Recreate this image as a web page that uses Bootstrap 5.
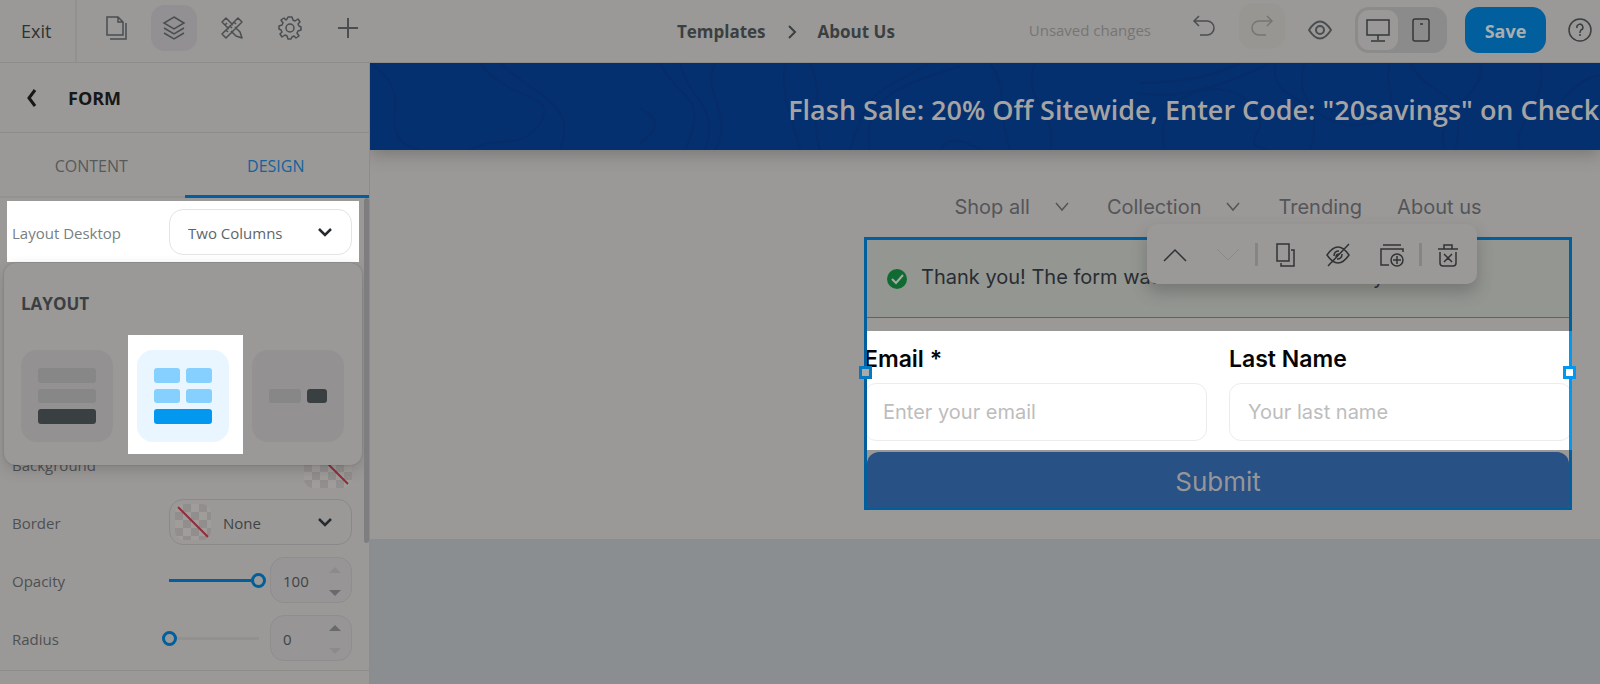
<!DOCTYPE html>
<html lang="en">
<head>
<meta charset="utf-8">
<meta name="viewport" content="width=device-width, initial-scale=1">
<title>Site editor – Form</title>
<link href="https://cdn.jsdelivr.net/npm/bootstrap@5.3.0/dist/css/bootstrap.min.css" rel="stylesheet">
<style>
:root{--paper:#9b9997;--ink:#3a3f42;--line:#8d8c8b;--accent:#005f9c;--bright:#0398f0}
html,body{height:100%}
body{background:var(--paper);color:var(--ink);font-family:"Open Sans","Noto Sans",sans-serif;font-size:15px;line-height:24px;overflow:hidden}
svg{display:block;fill:none;stroke:currentColor;flex:none}
button,select,input{font:inherit;color:inherit}
.topbar{height:63px;border-bottom:1px solid var(--line)}
.exit-link{width:77px;border-right:2px solid #929190;color:#2e3235;font-size:18px;padding-left:21px}
.tool{width:46px;height:46px;border:0;border-radius:14px;background:none;padding:0;display:grid;place-items:center;color:#4a4e51}
.tool.active{background:#929092}
.tool.soft{background:#989693}
.tools{padding:5px 0 0 16px;gap:12px}
.crumbs{font-size:17px;font-weight:700;padding:2px 0 0 172px;gap:16px}
.status{font-size:15px;color:#757575;margin-right:30px}
.actions{padding-bottom:2px}
.devices{background:#8b8b8b;border-radius:14px;padding:3px;height:46px;width:92px;margin:0 18px 0 12px}
.devices button{width:52px;height:40px;border:0;background:none;border-radius:11px;display:grid;place-items:center;padding:0;color:#35383a}
.devices .on{background:var(--paper);width:40px;flex:none}
.save{width:81px;height:46px;border:0;border-radius:14px;background:var(--accent);color:#a9aeb0;font-weight:700;font-size:18px;padding:2px 0 0;margin-right:22px}
.side{width:370px;border-right:1px solid var(--line)}
.side-head{height:70px;border-bottom:1px solid var(--line);font-size:18px;font-weight:700;color:#151719}
.side-tabs{height:65px;border-bottom:2px solid #949291;font-size:16px}
.side-tabs a{color:#56595b;margin-bottom:-2px;padding:1px 2px 0 0}
.side-tabs a.active{color:#16629a;border-bottom:3px solid var(--accent);padding-top:4px}
.props{padding-left:12px;padding-right:17px}
.prop{height:46px;margin-bottom:12px;color:#4d5052}
.prop:last-child{margin-bottom:9px}
.prop label,.prop>span{padding-top:2px}
.prop.spot{background:#fff;color:#78807f;height:61px;margin:3px -7px 179px -5px;padding:1px 7px 0 5px}
.picker{width:183px;height:46px}
.picker select{appearance:none;width:100%;height:100%;border:1px solid #8a898a;border-radius:14px;background:transparent;padding:2px 0 0 18px;color:#3f4345}
.picker.with-swatch select{padding-left:53px}
.spot .picker select{border-color:#e2e4e5;color:#5d6568}
.picker .arrow{position:absolute;right:20px;top:19px;pointer-events:none;color:#252b2e}
.swatch{width:36px;height:36px;border-radius:9px;overflow:hidden;background:repeating-conic-gradient(#918f8d 0 25%,#9f9c9a 0 50%) 0 0/16px 16px}
.swatch svg{width:100%;height:100%;stroke:#932a3a}
.picker .swatch{position:absolute;left:6px;top:5px;pointer-events:none}
.swatch.large{width:48px;height:48px}
.slider{width:104px;height:20px;appearance:none;background:none}
.slider::-webkit-slider-runnable-track{height:15px;background:linear-gradient(var(--fill),var(--fill)) center/calc(100% - 14px) 3px no-repeat}
.slider::-webkit-slider-thumb{appearance:none;width:15px;height:15px;border:3px solid var(--accent);border-radius:50%;background:var(--paper)}
.full{--fill:#005f9c}.empty{--fill:#939190}
.stepper{width:82px;height:46px;border:1px solid #8f8d8e;border-radius:14px;background:#989596}
.stepper input{width:100%;height:100%;border:0;background:none;padding:2px 0 0 12px;appearance:textfield;color:#3f4345}
.stepper input::-webkit-inner-spin-button{appearance:none;margin:0}
.stepper svg{position:absolute;right:10px;fill:#676b6d;stroke:none}
.stepper .up{top:9px}.stepper .down{bottom:6px}.stepper .off{fill:#8c8b8b}
.divider{border:0;border-top:1px solid var(--line);opacity:1}
.layout-menu{position:absolute;left:4px;right:7px;top:200px;height:202px;background:var(--paper);border-radius:12px;box-shadow:0 5px 14px rgba(40,40,40,.2),0 0 2px rgba(40,40,40,.25);padding:29px 17px 0}
.layout-menu h2{font-size:17px;line-height:24px;font-weight:700;margin:0 0 19px}
.choices{gap:9px}
.choice{border:0;background:none;padding:15px 8px 12px;width:107px;margin-left:-8px;margin-right:8px}
.choice svg{width:92px;height:92px;stroke:none;border-radius:16px;background:#949192}
.choice.picked{background:#fff;width:115px;padding-left:9px;padding-right:14px;margin:0 0 0 -9px}
.choice.picked svg{background:#e9f6ff}
.scroller{position:absolute;right:0;top:135px;width:5px;height:345px;border-radius:3px;background:#7e7e80}
.stage{background:#8a8e91}
.banner{height:87px;background:#05306f;box-shadow:0 4px 16px rgba(70,65,70,.4);position:relative;color:#a5a4a3}
.banner p{padding:6px 0 0 34%;font-size:27px;line-height:40px;font-weight:600;margin:0;position:relative}
.banner svg{position:absolute;inset:0;width:100%;height:100%;stroke:#062d69;stroke-width:2}
.sheet{background:var(--paper);height:389px;padding-left:calc(40% + 2px);padding-right:28px;font-family:Inter,"Liberation Sans",sans-serif;color:#505052;font-size:20px}
.site-nav{padding-top:45px;height:87px;gap:35px}
.site-nav a{color:#545559}
.site-nav svg{margin-left:25px;margin-right:3px}
.form-box{border:3px solid var(--accent);height:273px}
.alert-done{height:78px;background:#949692;border-bottom:1px solid #377c4b;padding:0 0 3px 20px;color:#292d33;font-size:20px}
.alert-done svg{margin:3px 14px 0 0}
.fields{background:#fff;margin:13px -3px 0 0;height:119px;column-gap:22px;padding-top:13px}
.fields>div{flex:1 1 0}
.fields label{font-size:23px;line-height:30px;font-weight:600;color:#050505;margin-bottom:9px;display:block}
.fields input{width:100%;height:58px;border:1px solid #ececec;border-radius:12px;background:#fff;padding:0 18px;font-size:20px}
.fields input::placeholder{color:#bdbdbd;opacity:1}
.fields .first{margin-left:-3px}
.submit{height:56px;border:0;border-radius:12px 12px 2px 2px;background:#285185;color:#969698;font-size:26px;margin-top:2px;padding:3px 0 0}
.frame-side{position:absolute;left:-3px;top:91px;height:119px;width:3px;background:var(--accent)}
.grip{position:absolute;width:13px;height:13px;border:3px solid var(--bright);background:#aaa;top:126px}
.grip.west{left:-8px;border-color:#0579c2}.grip.east{right:-7px;background:#fff}
.edge{position:absolute;right:-3px;top:91px;height:119px;width:3px;background:var(--bright)}
.float-tools{position:absolute;right:92px;top:-16px;width:330px;height:60px;background:var(--paper);border-radius:10px;box-shadow:0 8px 16px rgba(50,50,50,.3);color:#303336;padding:1px 2px 0 1px}
.float-tools button{border:0;background:none;padding:0;color:inherit;width:53px;display:grid;place-items:center}
.float-tools .faint{color:#8a888a}
.float-tools i{width:3px;height:23px;background:#868586}
</style>
</head>
<body class="d-flex flex-column">
<header class="topbar d-flex flex-shrink-0">
  <a href="#" class="exit-link d-flex align-items-center text-decoration-none">Exit</a>
  <div class="tools d-flex">
    <button class="tool" aria-label="Pages"><svg width="24" height="26" stroke-width="1.5"><path d="M3 2H14L19 7V20H3ZM14 2V7H19M22 8V24H6"/></svg></button>
    <button class="tool active" aria-label="Layers"><svg width="24" height="26" stroke-width="1.5"><path d="M12 2L22 8L12 14L2 8ZM2 13L12 19L22 13M2 18L12 24L22 18"/></svg></button>
    <button class="tool" aria-label="Design"><svg width="24" height="24" stroke-width="1.5" stroke-linejoin="round"><path d="M9 13L2 6L6 2L13 9M15 11L20 16L22 22L16 20L11 15M5 9L7 7M18 2L22 6L6 22L2 18ZM14 6L16 8M10 10L12 12M6 14L8 16"/></svg></button>
    <button class="tool" aria-label="Settings"><svg width="24" height="24" viewBox="0 0 24 24" stroke-width="1.5" stroke-linejoin="round"><path d="M10 1H14L15 4L17 5L20 3L22 6L20 8L21 10L23 11V14L20 15L19 17L21 20L18 22L16 20L14 21L13 23H10L9 20L7 19L4 21L2 18L4 16L3 14L1 13V10L4 9L5 7L3 4L6 2L8 4L9 3Z"/><circle cx="12" cy="12" r="4"/></svg></button>
    <button class="tool" aria-label="Add"><svg width="22" height="22" stroke-width="2"><path d="M11 1V21M1 11H21"/></svg></button>
  </div>
  <nav class="crumbs d-flex align-items-center flex-grow-1 justify-content-center" aria-label="Breadcrumb">
    <span>Templates</span>
    <svg width="20" height="14" stroke-width="2"><path d="M7 1L13 7L7 13"/></svg>
    <span>About Us</span>
  </nav>
  <div class="actions d-flex align-items-center">
    <span class="status">Unsaved changes</span>
    <button class="tool mb-2 me-2" aria-label="Undo"><svg width="24" height="22" stroke-width="1.5"><path d="M7 1L2 6L7 11M2 6H15A6 6 0 0 1 15 20H8"/></svg></button>
    <button class="tool soft mb-2 ms-1 me-2" aria-label="Redo"><svg width="24" height="22" stroke-width="1.5" opacity=".45"><path d="M17 1L22 6L17 11M22 6H9A6 6 0 0 0 9 20H16"/></svg></button>
    <button class="tool ms-1" aria-label="Preview"><svg width="24" height="20" stroke-width="2"><path d="M1 10Q12 -7 23 10Q12 27 1 10Z"/><circle cx="12" cy="10" r="4"/></svg></button>
    <div class="devices d-flex">
      <button class="on" aria-label="Desktop"><svg width="24" height="24" stroke-width="1.5"><path d="M1 2H23V17H1ZM12 17V22M5 23H19"/></svg></button>
      <button aria-label="Mobile"><svg width="18" height="24" stroke-width="1.5"><rect x="1" y="1" width="16" height="22" rx="2"/><path d="M8 6H11"/></svg></button>
    </div>
    <button class="save">Save</button>
    <button class="border-0 bg-transparent p-0 me-2" aria-label="Help"><svg width="24" height="24" stroke-width="1.5"><circle cx="12" cy="12" r="11"/><path d="M9 10A3 3 0 1 1 13 12Q12 13 12 15M12 16V18"/></svg></button>
  </div>
</header>

<div class="d-flex flex-grow-1 overflow-hidden">
  <aside class="side flex-shrink-0 position-relative overflow-hidden">
    <div class="side-head d-flex align-items-center">
      <button class="border-0 bg-transparent p-0 ms-4 me-4" aria-label="Back"><svg width="16" height="18" stroke-width="3"><path d="M11 1L5 9L11 17"/></svg></button>
      <span class="ps-1">FORM</span>
    </div>
    <nav class="side-tabs d-flex">
      <a href="#" class="w-50 d-flex align-items-center justify-content-center text-decoration-none">CONTENT</a>
      <a href="#" class="active w-50 d-flex align-items-center justify-content-center text-decoration-none">DESIGN</a>
    </nav>
    <div class="props">
      <div class="prop spot d-flex align-items-center justify-content-between">
        <label for="layout">Layout Desktop</label>
        <div class="picker position-relative"><select id="layout"><option>Two Columns</option></select><svg class="arrow" width="14" height="10" stroke-width="2.5"><path d="M1 1L7 7L13 1"/></svg></div>
      </div>
      <div class="prop d-flex align-items-center justify-content-between"><span>Background</span><div class="swatch large"><svg viewBox="0 0 36 36" stroke-width="1.5"><path d="M3 3L33 33"/></svg></div></div>
      <div class="prop d-flex align-items-center justify-content-between">
        <label for="border">Border</label>
        <div class="picker with-swatch position-relative"><select id="border"><option>None</option></select><div class="swatch"><svg viewBox="0 0 36 36" stroke-width="2"><path d="M3 3L33 33"/></svg></div><svg class="arrow" width="14" height="10" stroke-width="2.5"><path d="M1 1L7 7L13 1"/></svg></div>
      </div>
      <div class="prop d-flex align-items-center">
        <label for="opacity" class="me-auto">Opacity</label>
        <input class="slider full" type="range" id="opacity" min="0" max="100" value="100">
        <div class="stepper position-relative ms-1"><input type="number" value="100" aria-label="Opacity value"><svg class="up off" width="12" height="6"><path d="M0 6L6 0L12 6Z"/></svg><svg class="down" width="12" height="6"><path d="M0 0L6 6L12 0Z"/></svg></div>
      </div>
      <div class="prop d-flex align-items-center">
        <label for="radius" class="me-auto">Radius</label>
        <input class="slider empty" type="range" id="radius" min="0" max="100" value="0">
        <div class="stepper position-relative ms-1"><input type="number" value="0" aria-label="Radius value"><svg class="up" width="12" height="6"><path d="M0 6L6 0L12 6Z"/></svg><svg class="down off" width="12" height="6"><path d="M0 0L6 6L12 0Z"/></svg></div>
      </div>
    </div>
    <hr class="divider m-0">
    <section class="layout-menu">
      <h2>LAYOUT</h2>
      <div class="choices d-flex">
        <button class="choice" aria-label="One column"><svg viewBox="0 0 92 92"><g fill="#878787"><rect x="17" y="18" width="58" height="15" rx="3"/><rect x="17" y="39" width="58" height="14" rx="3"/></g><rect x="17" y="59" width="58" height="15" rx="3" fill="#3a3f42"/></svg></button>
        <button class="choice picked" aria-label="Two columns"><svg viewBox="0 0 92 92"><g fill="#85d0ff"><rect x="17" y="18" width="26" height="15" rx="3"/><rect x="49" y="18" width="26" height="15" rx="3"/><rect x="17" y="39" width="26" height="14" rx="3"/><rect x="49" y="39" width="26" height="14" rx="3"/></g><rect x="17" y="59" width="58" height="15" rx="3" fill="#0398f0"/></svg></button>
        <button class="choice" aria-label="Inline"><svg viewBox="0 0 92 92"><rect x="17" y="39" width="32" height="14" rx="3" fill="#878787"/><rect x="55" y="39" width="20" height="14" rx="3" fill="#3a3f42"/></svg></button>
      </div>
    </section>
    <div class="scroller"></div>
  </aside>

  <main class="stage flex-grow-1 overflow-hidden">
    <div class="banner d-flex align-items-center">
      <svg viewBox="0 0 1230 87" preserveAspectRatio="none"><path d="M0 0Q30 20 25 50T50 87M290 0C310 40 340 30 315 87M310 0C320 40 350 40 335 87M345 0C330 30 365 50 345 87M270 45Q300 60 270 80M440 0C455 30 440 60 450 87M415 0C410 40 425 60 430 87M480 87C500 20 510 30 560 0M500 87C490 30 540 20 590 3M570 87C580 70 600 80 610 87M620 0C640 30 625 40 640 87M680 87C690 50 650 40 665 0M770 30Q820 40 900 0M770 20Q830 20 870 0M795 87C780 30 850 10 880 40S860 80 900 87M905 0C900 50 960 20 940 87M935 0C920 40 960 70 1000 60S1010 20 1020 0M1040 0C1060 40 1100 20 1085 87M1075 87C1060 50 1120 30 1110 0M1170 0C1180 40 1140 60 1150 87M1190 40Q1210 15 1230 12M110 0C140 40 190 30 170 60S130 70 100 87M130 0C160 30 210 40 190 87"/></svg>
      <p class="text-nowrap">Flash Sale: 20% Off Sitewide, Enter Code: "20savings" on Checkout</p>
    </div>
    <div class="sheet">
      <nav class="site-nav d-flex justify-content-center align-items-start text-nowrap">
        <a href="#" class="d-flex align-items-center text-decoration-none">Shop all<svg width="14" height="10" stroke-width="1.5"><path d="M1 1L7 8L13 1"/></svg></a>
        <a href="#" class="d-flex align-items-center text-decoration-none">Collection<svg width="14" height="10" stroke-width="1.5"><path d="M1 1L7 8L13 1"/></svg></a>
        <a href="#" class="text-decoration-none">Trending</a>
        <a href="#" class="text-decoration-none">About us</a>
      </nav>
      <form class="form-box position-relative" onsubmit="return false">
        <div class="alert-done d-flex align-items-center text-nowrap">
          <svg width="20" height="20"><circle cx="10" cy="10" r="10" fill="#0f6b31" stroke="none"/><path d="M5 10L9 14L16 6" stroke="#a7aaa6" stroke-width="2"/></svg>
          <span>Thank you! The form was submitted successfully</span>
        </div>
        <div class="fields d-flex">
          <div class="first"><label for="email">Email *</label><input id="email" type="email" placeholder="Enter your email"></div>
          <div><label for="last">Last Name</label><input id="last" type="text" placeholder="Your last name"></div>
        </div>
        <button class="submit w-100 d-block">Submit</button>
        <span class="frame-side"></span><span class="edge"></span><span class="grip west"></span><span class="grip east"></span>
        <div class="float-tools d-flex align-items-center justify-content-between">
          <button aria-label="Move up"><svg width="24" height="14" stroke-width="1.5"><path d="M1 13L12 2L23 13"/></svg></button>
          <button class="faint" aria-label="Move down"><svg width="24" height="14" stroke-width="1"><path d="M1 1L12 12L23 1"/></svg></button>
          <i></i>
          <button aria-label="Duplicate"><svg width="20" height="24" stroke-width="1.5"><path d="M2 1H14V18H2ZM16 7H19V23H6V20"/></svg></button>
          <button aria-label="Hide"><svg width="24" height="24" stroke-width="1.5"><path d="M1 12Q12 -4 23 12Q12 28 1 12ZM2 23L23 1M8 13Q8 8 13 8M10 14Q10 11 13 11M11 16Q16 16 16 11"/></svg></button>
          <button aria-label="Add to section"><svg width="26" height="24" stroke-width="1.5"><path d="M4 2H22M24 9V6H2V22H10"/><circle cx="18" cy="17" r="6"/><path d="M18 13V21M14 17H22"/></svg></button>
          <i></i>
          <button aria-label="Delete"><svg width="22" height="24" stroke-width="1.5"><path d="M1 6H21M7 6V2H15V6M3 9V20Q3 23 6 23H16Q19 23 19 20V9M7 11L15 19M15 11L7 19"/></svg></button>
        </div>
      </form>
    </div>
  </main>
</div>
<script src="https://cdn.jsdelivr.net/npm/bootstrap@5.3.0/dist/js/bootstrap.bundle.min.js"></script>
</body>
</html>
